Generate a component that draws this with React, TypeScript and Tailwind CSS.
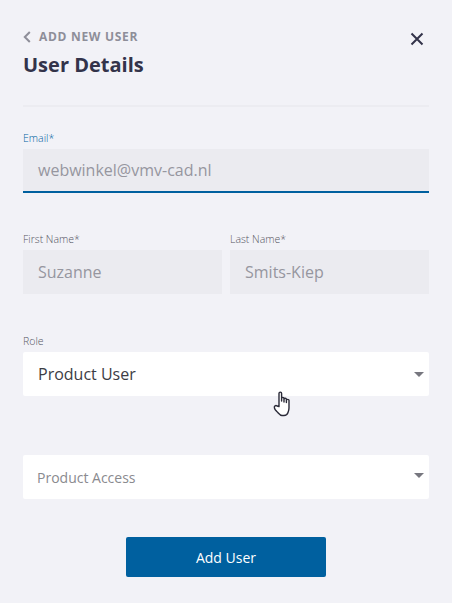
export default function App() {
  return (
    <div className="relative h-[603px] w-[452px] overflow-hidden bg-[#f2f2f7] font-['Open_Sans',sans-serif]">
      <div className="flex flex-col px-[23px] pt-[28px]">
        <div className="flex items-start justify-between">
          <div className="flex flex-col">
            <div className="flex h-[18px] items-center">
              <svg width="8" height="12" viewBox="0 0 8 12" className="mr-[8px]" fill="none">
                <path d="M6.8 1 L1.8 6 L6.8 11" stroke="#8e8e99" strokeWidth="2" />
              </svg>
              <span className="text-[12px] font-bold leading-[18px] tracking-[0.7px] text-[#8e8e99]">ADD NEW USER</span>
            </div>
            <h1 className="mt-[6px] text-[20px] font-bold leading-[26px] text-[#33334a]">User Details</h1>
          </div>
          <svg width="14" height="14" viewBox="0 0 14 14" className="mr-[5px] mt-[4px]" fill="none">
            <path d="M1.5 1.5 L12.5 12.5 M12.5 1.5 L1.5 12.5" stroke="#33334a" strokeWidth="2" />
          </svg>
        </div>
        <div className="mt-[27px] h-[2px] bg-[#ececf1]" />

        <label className="mt-[24px] block text-[10.5px] font-light leading-[14px] text-[#00609f]">Email*</label>
        <div className="mt-[4px] flex h-[44px] items-center border-b-2 border-[#00609f] bg-[#ebebf0] pl-[15px] text-[16px] text-[#96969f]">webwinkel@vmv-cad.nl</div>

        <div className="mt-[39px] grid grid-cols-2 gap-[8px]">
          <div>
            <label className="block text-[10.5px] font-light leading-[14px] text-[#55555f]">First Name*</label>
            <div className="mt-[4px] flex h-[44px] items-center bg-[#ebebf0] pl-[15px] text-[16px] text-[#96969f]">Suzanne</div>
          </div>
          <div>
            <label className="block text-[10.5px] font-light leading-[14px] text-[#55555f]">Last Name*</label>
            <div className="mt-[4px] flex h-[44px] items-center bg-[#ebebf0] pl-[15px] text-[16px] text-[#96969f]">Smits-Kiep</div>
          </div>
        </div>

        <label className="mt-[40px] block text-[10.5px] font-light leading-[14px] text-[#55555f]">Role</label>
        <div className="mt-[4px] flex h-[44px] items-center justify-between rounded-[2px] bg-white pl-[15px] pr-[5px] text-[16px] text-[#3c3c44]">
          <span>Product User</span>
          <svg width="10" height="5" viewBox="0 0 10 5"><path d="M0 0 H10 L5 5 Z" fill="#77777f" /></svg>
        </div>

        <div className="mt-[59px] flex h-[44px] items-center justify-between rounded-[2px] bg-white pl-[14px] pr-[5px] text-[14px] text-[#8a8a8f]">
          <span>Product Access</span>
          <svg width="10" height="5" viewBox="0 0 10 5" className="mb-[3px]"><path d="M0 0 H10 L5 5 Z" fill="#77777f" /></svg>
        </div>

        <button className="mx-auto mt-[38px] flex h-[40px] w-[200px] items-center justify-center rounded-[2px] bg-[#00609f] text-[14px] text-white">Add User</button>
      </div>

      <svg width="20" height="26" viewBox="0 0 20 26" className="absolute left-[273px] top-[391px]" fill="#fff" stroke="#2a2a38" strokeWidth="1.4" strokeLinejoin="round" strokeLinecap="round">
        <path d="M6 15.5 V2.5 C6 0.6 8.6 0.6 8.6 2.5 V10 V7.5 C8.6 6 11 6 11 7.5 V11 V8.3 C11 6.9 13.4 6.9 13.4 8.3 V11.5 V9.3 C13.4 8 16 8 16 9.3 V17 C16 19 15.6 20 15 21.5 C14.6 22.8 13.5 24.5 11 24.5 H9 C7 24.5 5.5 22 3.8 20.5 C2.5 19.2 1.6 18 1.4 16.8 C1 15 2.8 14 4 15 Z" />
      </svg>
    </div>
  );
}
